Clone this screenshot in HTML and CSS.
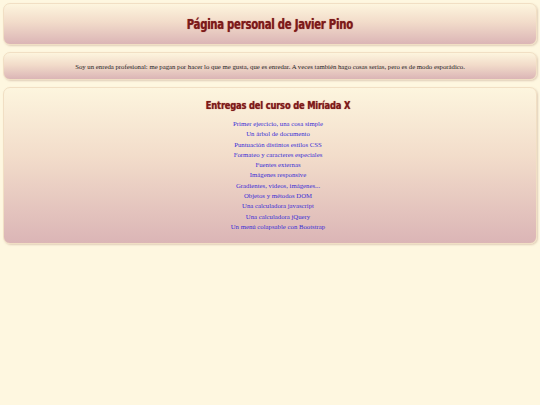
FILE: index.html
```html
<!DOCTYPE html>
<html lang="es">
<head>
<meta charset="utf-8">
<title>Página personal de Javier Pino</title>
<link rel="stylesheet" href="styles.css">
</head>
<body>
<header class="box header">
  <h1 class="title">Página personal de Javier Pino</h1>
</header>
<section class="box intro">
  <p>Soy un enreda profesional: me pagan por hacer lo que me gusta, que es enredar. A veces también hago cosas serias, pero es de modo esporádico.</p>
</section>
<section class="box entregas">
  <h2 class="subtitle">Entregas del curso de Miríada X</h2>
  <ul class="links">
    <li><a href="#">Primer ejercicio, una cosa simple</a></li>
    <li><a href="#">Un árbol de documento</a></li>
    <li><a href="#">Puntuación distintos estilos CSS</a></li>
    <li><a href="#">Formateo y caracteres especiales</a></li>
    <li><a href="#">Fuentes externas</a></li>
    <li><a href="#">Imágenes responsive</a></li>
    <li><a href="#">Gradientes, videos, imágenes...</a></li>
    <li><a href="#">Objetos y métodos DOM</a></li>
    <li><a href="#">Una calculadora javascript</a></li>
    <li><a href="#">Una calculadora jQuery</a></li>
    <li><a href="#">Un menú colapsable con Bootstrap</a></li>
  </ul>
</section>
</body>
</html>
```
FILE: styles.css
```css
html, body {
  margin: 0;
  padding: 0;
  background: #fef7e0;
}
body {
  padding: 3px 3px 0 3px;
  font-family: "Liberation Serif", "Times New Roman", serif;
  color: #222;
}
.box {
  box-sizing: border-box;
  border: 1px solid #f1dfc4;
  border-radius: 7px;
  background: linear-gradient(to bottom, #fdf5de 0%, #f2dcca 45%, #dbb5b6 100%);
  box-shadow: 1px 1px 2px rgba(170, 130, 110, 0.35);
  margin-bottom: 7px;
  text-align: center;
}
.header {
  height: 42px;
  display: flex;
  align-items: center;
  justify-content: center;
}
.title {
  margin: 0;
  font-family: "DejaVu Sans Condensed", "Liberation Sans", sans-serif;
  font-weight: bold;
  font-size: 14px;
  letter-spacing: -0.3px;
  color: #7b1a1a;
  text-shadow: 0 0 1px #b04040;
  transform: scaleX(0.8);
}
.intro {
  height: 28px;
  display: flex;
  align-items: center;
  justify-content: center;
}
.intro p {
  margin: 0;
  font-size: 6.75px;
  color: #1e1e1e;
}
.entregas {
  height: 157px;
  padding: 11px 0 0 16px;
}
.subtitle {
  margin: 0 0 7px 0;
  font-family: "DejaVu Sans Condensed", "Liberation Sans", sans-serif;
  font-weight: bold;
  font-size: 11px;
  letter-spacing: -0.2px;
  color: #7b1a1a;
  text-shadow: 0 0 1px #b04040;
  transform: scaleX(0.84);
}
.links {
  list-style: none;
  margin: 0;
  padding: 0;
  font-size: 6.75px;
  line-height: 10.3px;
}
.links a {
  color: #3a2ed6;
  text-decoration: none;
}
```
